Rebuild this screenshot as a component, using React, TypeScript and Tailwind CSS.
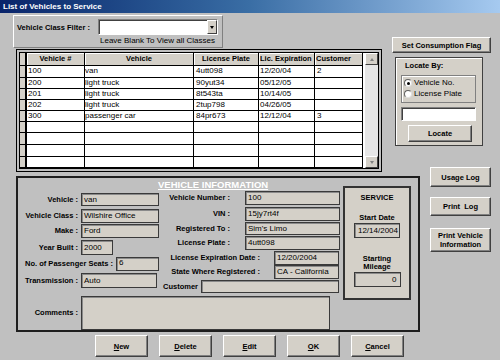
import type { ReactNode } from 'react'

type Row = { id: string; vehicle: string; plate: string; exp: string; customer: string }

const rows: Row[] = [
  { id: '100', vehicle: 'van', plate: '4utt098', exp: '12/20/04', customer: '2' },
  { id: '200', vehicle: 'light truck', plate: '90yut34', exp: '05/12/05', customer: '' },
  { id: '201', vehicle: 'light truck', plate: '8t543ta', exp: '10/14/05', customer: '' },
  { id: '202', vehicle: 'light truck', plate: '2tup798', exp: '04/26/05', customer: '' },
  { id: '300', vehicle: 'passenger car', plate: '84pr673', exp: '12/12/04', customer: '3' },
]

// row heights incl. the bottom grid line
const rowHeights = ['h-[12px]', 'h-[11px]', 'h-[11px]', 'h-[12px]', 'h-[11px]', 'h-[11px]', 'h-[12px]', 'h-[12px]', 'h-[11px]']

function Btn({ className, children }: { className: string; children: ReactNode }) {
  return (
    <div
      className={`flex items-center justify-center text-center bg-[#d4d0c8] border border-t-white border-l-white border-r-[#404040] border-b-[#404040] shadow-[inset_-1px_-1px_0_#808080] text-[7.5px] font-bold leading-[9px] text-black ${className}`}
    >
      {children}
    </div>
  )
}

function Box({ className, children }: { className: string; children?: ReactNode }) {
  return (
    <div
      className={`flex items-center bg-[#d4d0c8] border border-[#3a3a3a] shadow-[inset_1px_1px_0_#8a8a8a] pl-[2px] text-[8px] leading-none text-black ${className}`}
    >
      {children}
    </div>
  )
}

function Label({ className, children }: { className: string; children: ReactNode }) {
  return <div className={`text-[7.5px] font-bold leading-none text-black ${className}`}>{children}</div>
}

function Radio({ checked, label }: { checked: boolean; label: string }) {
  return (
    <div className="flex items-center h-[11px]">
      <div className="w-[8px] h-[8px] rounded-full bg-white border border-t-[#606060] border-l-[#606060] border-r-[#e0e0e0] border-b-[#e0e0e0] flex items-center justify-center">
        {checked && <div className="w-[3px] h-[3px] rounded-full bg-black" />}
      </div>
      <span className="ml-[2px] text-[8px] leading-none">{label}</span>
    </div>
  )
}

export default function App() {
  return (
    <div className="w-[500px] h-[360px] overflow-hidden bg-[#c0c0c0] font-['Liberation_Sans',Arial,sans-serif] text-black flex flex-col">
      {/* Title bar */}
      <div className="h-[13px] bg-gradient-to-r from-[#0a246a] via-[#3a6ea5] to-[#a6caf0] flex items-center pl-[3px]">
        <span className="text-white text-[8px] font-bold leading-none">List of Vehicles to Service</span>
      </div>

      {/* Top section */}
      <div className="flex mt-[2px] pl-[13px]">
        <div className="w-[373px] flex flex-col">
          {/* Filter panel */}
          <div className="w-[210px] h-[33px] flex border border-t-white border-l-white border-r-[#808080] border-b-[#808080]">
            <Label className="w-[84px] pl-[3px] pt-[8px]">Vehicle Class Filter :</Label>
            <div className="flex flex-col pt-[3px]">
              <div className="w-[120px] h-[16px] bg-white flex border border-t-[#808080] border-l-[#808080] border-r-white border-b-white shadow-[inset_1px_1px_0_#404040]">
                <div className="flex-1" />
                <div className="w-[10px] h-full bg-[#d4d0c8] border border-t-white border-l-white border-r-[#404040] border-b-[#404040] flex items-center justify-center">
                  <div className="w-0 h-0 border-l-[2.5px] border-r-[2.5px] border-t-[3px] border-l-transparent border-r-transparent border-t-black" />
                </div>
              </div>
              <span className="mt-[2px] ml-[2px] text-[8px] leading-none">Leave Blank To View all Classes</span>
            </div>
          </div>

          {/* Grid */}
          <div className="ml-[3px] mt-[1px] w-[366px] h-[123px] border border-black p-[2px]">
            <div className="h-full border border-black bg-white flex">
              <div className="w-[343px] flex flex-col">
                <div className="h-[13px] flex border-b border-black text-[7.5px] font-bold leading-none">
                  <div className="w-[7px] bg-[#d4d0c8] border-r-2 border-black" />
                  <div className="w-[58px] bg-[#d4d0c8] border-r border-black flex items-center justify-center shadow-[inset_1px_1px_0_#fff]">Vehicle #</div>
                  <div className="w-[109px] bg-[#d4d0c8] border-r border-black flex items-center justify-center shadow-[inset_1px_1px_0_#fff]">Vehicle</div>
                  <div className="w-[65px] bg-[#d4d0c8] border-r border-black flex items-center justify-center shadow-[inset_1px_1px_0_#fff]">License Plate</div>
                  <div className="w-[56px] bg-[#d4d0c8] border-r border-black flex items-center pl-[1px] shadow-[inset_1px_1px_0_#fff]">Lic. Expiration</div>
                  <div className="w-[48px] bg-[#d4d0c8] border-r border-black flex items-center pl-[1px] shadow-[inset_1px_1px_0_#fff]">Customer</div>
                </div>
                {rowHeights.map((h, i) => {
                  const r = rows[i]
                  return (
                    <div key={i} className={`${h} flex border-b border-black text-[8px] leading-none`}>
                      <div className="w-[7px] bg-[#d4d0c8] border-r-2 border-black" />
                      <div className="w-[58px] border-r border-black pl-[1px] flex items-center">{r?.id}</div>
                      <div className="w-[109px] border-r border-black flex items-start pt-[1px]">{r?.vehicle}</div>
                      <div className="w-[65px] border-r border-black pl-[2px] flex items-center">{r?.plate}</div>
                      <div className="w-[56px] border-r border-black pl-[1px] flex items-center">{r?.exp}</div>
                      <div className="w-[48px] border-r border-black pl-[2px] flex items-center">{r?.customer}</div>
                    </div>
                  )
                })}
              </div>
              <div className="ml-[2px] w-[13px] flex flex-col bg-[#e6e6e6]">
                <div className="h-[12px] bg-[#d4d0c8] border border-t-white border-l-white border-r-[#404040] border-b-[#404040] flex items-center justify-center">
                  <div className="w-0 h-0 border-l-[2.5px] border-r-[2.5px] border-b-[3px] border-l-transparent border-r-transparent border-b-[#808080]" />
                </div>
                <div className="flex-1" />
                <div className="h-[12px] bg-[#d4d0c8] border border-t-white border-l-white border-r-[#404040] border-b-[#404040] flex items-center justify-center">
                  <div className="w-0 h-0 border-l-[2.5px] border-r-[2.5px] border-t-[3px] border-l-transparent border-r-transparent border-t-[#808080]" />
                </div>
              </div>
            </div>
          </div>
        </div>

        {/* Right top column */}
        <div className="ml-[6px] flex flex-col">
          <Btn className="mt-[22px] w-[99px] h-[16px]">Set Consumption Flag</Btn>
          <div className="mt-[4px] ml-[3px] w-[88px] h-[89px] bg-[#d4d0c8] border border-[#404040] shadow-[inset_1px_1px_0_#fff] flex flex-col">
            <Label className="mt-[4px] ml-[9px]">Locate By:</Label>
            <div className="mt-[5px] ml-[5px] w-[75px] h-[28px] border border-[#808080] shadow-[inset_1px_1px_0_#fff] flex flex-col justify-center pl-[2px]">
              <Radio checked label="Vehicle No." />
              <Radio checked={false} label="License Plate" />
            </div>
            <div className="mt-[4px] ml-[5px] w-[75px] h-[14px] bg-white border border-t-[#808080] border-l-[#808080] border-r-white border-b-white shadow-[inset_1px_1px_0_#404040]" />
            <Btn className="mt-[4px] ml-[12px] w-[64px] h-[17px]">Locate</Btn>
          </div>
        </div>
      </div>

      {/* Middle section */}
      <div className="flex mt-[4px] pl-[16px] items-start">
        <div className="w-[404px] h-[156px] border-2 border-[#1e1e1e] flex">
          <div className="w-[322px] flex flex-col">
            <div className="h-[13px] pl-[140px] flex items-center">
              <span className="text-white text-[9.5px] font-bold leading-none underline decoration-white underline-offset-[1px]">VEHICLE INFORMATION</span>
            </div>
            <div className="flex">
              {/* left fields */}
              <div className="w-[142px] flex flex-col">
                <div className="mt-[2px] h-[13px] flex items-center">
                  <Label className="w-[60px] text-right">Vehicle :</Label>
                  <Box className="ml-[3px] w-[78px] h-full">van</Box>
                </div>
                <div className="mt-[3px] h-[14px] flex items-center">
                  <Label className="w-[60px] text-right">Vehicle Class :</Label>
                  <Box className="ml-[3px] w-[78px] h-full">Wilshire Office</Box>
                </div>
                <div className="mt-[1px] h-[14px] flex items-center">
                  <Label className="w-[60px] text-right">Make :</Label>
                  <Box className="ml-[3px] w-[78px] h-full">Ford</Box>
                </div>
                <div className="mt-[2px] h-[15px] flex items-center">
                  <Label className="w-[60px] text-right">Year Built :</Label>
                  <Box className="ml-[3px] w-[32px] h-full">2000</Box>
                </div>
                <div className="mt-[2px] h-[14px] flex items-center">
                  <Label className="w-[95px] text-right">No. of Passenger Seats :</Label>
                  <Box className="ml-[3px] w-[43px] h-full items-start pt-[1px]">6</Box>
                </div>
                <div className="mt-[2px] h-[15px] flex items-center">
                  <Label className="w-[60px] text-right">Transmission :</Label>
                  <Box className="ml-[3px] w-[76px] h-full">Auto</Box>
                </div>
              </div>
              {/* middle fields */}
              <div className="w-[180px] flex flex-col">
                <div className="h-[14px] flex items-center">
                  <Label className="w-[70px] text-right">Vehicle Number :</Label>
                  <Box className="ml-[15px] w-[95px] h-full">100</Box>
                </div>
                <div className="mt-[2px] h-[14px] flex items-center">
                  <Label className="w-[70px] text-right">VIN :</Label>
                  <Box className="ml-[15px] w-[95px] h-full">15jy7rt4f</Box>
                </div>
                <div className="mt-[1px] h-[13px] flex items-center">
                  <Label className="w-[70px] text-right">Registered To :</Label>
                  <Box className="ml-[15px] w-[95px] h-full">Sim&apos;s Limo</Box>
                </div>
                <div className="mt-[1px] h-[14px] flex items-center">
                  <Label className="w-[70px] text-right">License Plate :</Label>
                  <Box className="ml-[15px] w-[95px] h-full">4utt098</Box>
                </div>
                <div className="mt-[1px] h-[14px] flex items-center">
                  <Label className="w-[100px] text-right">License Expiration Date :</Label>
                  <Box className="ml-[14px] w-[65px] h-full">12/20/2004</Box>
                </div>
                <div className="h-[14px] flex items-center">
                  <Label className="w-[100px] text-right">State Where Registered :</Label>
                  <Box className="ml-[14px] w-[65px] h-full">CA - California</Box>
                </div>
                <div className="mt-[1px] h-[13px] flex items-center">
                  <Label className="ml-[3px]">Customer</Label>
                  <Box className="ml-[3px] w-[138px] h-full" />
                </div>
              </div>
            </div>
            {/* comments */}
            <div className="mt-[3px] h-[34px] flex items-center">
              <Label className="w-[60px] text-right">Comments :</Label>
              <Box className="ml-[3px] w-[249px] h-full" />
            </div>
          </div>

          {/* service box */}
          <div className="ml-[3px] mt-[8px] w-[68px] h-[114px] border-2 border-[#333] bg-[#d4d0c8] flex flex-col items-center">
            <Label className="mt-[6px]">SERVICE</Label>
            <Label className="mt-[12px]">Start Date</Label>
            <Box className="mt-[2px] w-[46px] h-[15px] justify-center pl-0">12/14/2004</Box>
            <Label className="mt-[17px] text-center leading-[9px]">
              Starting
              <br />
              Mileage
            </Label>
            <Box className="mt-[2px] w-[47px] h-[15px] justify-end pr-[3px]">0</Box>
          </div>
        </div>

        {/* right buttons */}
        <div className="ml-[10px] -mt-[9px] flex flex-col">
          <Btn className="w-[61px] h-[20px]">Usage Log</Btn>
          <Btn className="mt-[10px] w-[61px] h-[19px]">Print&nbsp; Log</Btn>
          <Btn className="mt-[12px] w-[61px] h-[24px]">
            Print Vehicle
            <br />
            Information
          </Btn>
        </div>
      </div>

      {/* Bottom buttons */}
      <div className="flex mt-[3px] pl-[95px] gap-[11px]">
        <Btn className="w-[53px] h-[22px]"><span className="underline">N</span>ew</Btn>
        <Btn className="w-[53px] h-[22px]"><span className="underline">D</span>elete</Btn>
        <Btn className="w-[53px] h-[22px]"><span className="underline">E</span>dit</Btn>
        <Btn className="w-[53px] h-[22px]"><span className="underline">O</span>K</Btn>
        <Btn className="w-[53px] h-[22px]"><span className="underline">C</span>ancel</Btn>
      </div>
    </div>
  )
}
